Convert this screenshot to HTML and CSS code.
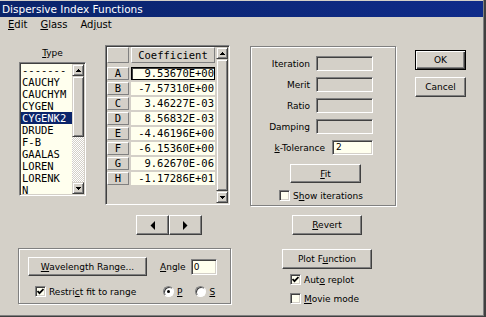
FILE: index.html
```html
<!DOCTYPE html>
<html lang="en">
<head>
    <meta charset="UTF-8">
    <title>Dispersive Index Functions</title>
    <link rel="stylesheet" href="styles.css">
</head>
<body>
<div class="window">
    <div class="titlebar">Dispersive Index Functions</div>
    <div class="menubar">
        <span><u>E</u>dit</span>
        <span><u>G</u>lass</span>
        <span>Ad<u>j</u>ust</span>
    </div>

    <div class="dialog">
        <!-- left side: type list, coefficient grid, wavelength group -->
        <div class="col-left">
            <div class="top-row">
                <div class="type-col">
                    <div class="type-label"><u>T</u>ype</div>
                    <div class="listbox sunken">
                        <div class="list-items">
                            <div class="item">-------</div>
                            <div class="item">CAUCHY</div>
                            <div class="item">CAUCHYM</div>
                            <div class="item">CYGEN</div>
                            <div class="item selected">CYGENK2</div>
                            <div class="item">DRUDE</div>
                            <div class="item">F-B</div>
                            <div class="item">GAALAS</div>
                            <div class="item">LOREN</div>
                            <div class="item">LORENK</div>
                            <div class="item">N</div>
                        </div>
                        <div class="vscroll">
                            <div class="sb-btn"><svg width="5" height="3" shape-rendering="crispEdges"><path d="M2 0h1v1h1v1h1v1H0V2h1V1h1z"/></svg></div>
                            <div class="sb-thumb list-thumb"></div>
                            <div class="sb-track"></div>
                            <div class="sb-btn"><svg width="5" height="3" shape-rendering="crispEdges"><path d="M0 0h5v1H4v1H3v1H2V2H1V1H0z"/></svg></div>
                        </div>
                    </div>
                </div>

                <div class="grid sunken">
                    <div class="grid-cells">
                        <div class="grid-head">
                            <div class="hcell corner"></div>
                            <div class="hcell coef">Coefficient</div>
                        </div>
                        <div class="grid-rows">
                            <div class="rcell">A</div><div class="vcell current">9.53670E+00</div>
                            <div class="rcell">B</div><div class="vcell">-7.57310E+00</div>
                            <div class="rcell">C</div><div class="vcell">3.46227E-03</div>
                            <div class="rcell">D</div><div class="vcell">8.56832E-03</div>
                            <div class="rcell">E</div><div class="vcell">-4.46196E+00</div>
                            <div class="rcell">F</div><div class="vcell">-6.15360E+00</div>
                            <div class="rcell">G</div><div class="vcell">9.62670E-06</div>
                            <div class="rcell">H</div><div class="vcell">-1.17286E+01</div>
                        </div>
                    </div>
                    <div class="vscroll">
                        <div class="sb-btn"><svg width="5" height="3" shape-rendering="crispEdges"><path d="M2 0h1v1h1v1h1v1H0V2h1V1h1z"/></svg></div>
                        <div class="sb-thumb grid-thumb"></div>
                        <div class="sb-btn"><svg width="5" height="3" shape-rendering="crispEdges"><path d="M0 0h5v1H4v1H3v1H2V2H1V1H0z"/></svg></div>
                    </div>
                </div>
            </div>

            <div class="nav-buttons">
                <button class="btn nav"><svg width="5" height="9"><path d="M5 0v9L0.5 4.5z"/></svg></button>
                <button class="btn nav"><svg width="5" height="9"><path d="M0 0v9l4.5-4.5z"/></svg></button>
            </div>

            <div class="groupbox range-group">
                <button class="btn range-btn"><span><u>W</u>avelength Range...</span></button>
                <div class="angle">
                    <span><u>A</u>ngle</span>
                    <div class="textbox edit angle-box">0</div>
                </div>
                <div class="check-row restrict">
                    <div class="check"><svg width="7" height="7"><path d="M0.5 3l2 2.2L6.5 1" fill="none" stroke="#000" stroke-width="1.8"/></svg></div>
                    <span>Restri<u>c</u>t fit to range</span>
                </div>
                <div class="radios">
                    <div class="radio"><span class="dot"></span></div>
                    <span class="radio-text"><u>P</u></span>
                    <div class="radio s-radio"></div>
                    <span class="radio-text"><u>S</u></span>
                </div>
            </div>
        </div>

        <!-- middle: fit settings -->
        <div class="col-mid">
            <div class="groupbox fit-group">
                <div class="field-row"><span>Iteration</span><div class="textbox wide"></div></div>
                <div class="field-row"><span>Merit</span><div class="textbox wide"></div></div>
                <div class="field-row"><span>Ratio</span><div class="textbox wide"></div></div>
                <div class="field-row"><span>Damping</span><div class="textbox wide"></div></div>
                <div class="field-row tol"><span><u>k</u>-Tolerance</span><div class="textbox edit narrow">2</div></div>
                <button class="btn fit-btn"><span><u>F</u>it</span></button>
                <div class="check-row show-iter">
                    <div class="check"></div>
                    <span>S<u>h</u>ow iterations</span>
                </div>
            </div>
            <button class="btn revert-btn"><span><u>R</u>evert</span></button>
            <button class="btn plot-btn"><span>Plot F<u>u</u>nction</span></button>
            <div class="check-row auto-replot">
                <div class="check"><svg width="7" height="7"><path d="M0.5 3l2 2.2L6.5 1" fill="none" stroke="#000" stroke-width="1.8"/></svg></div>
                <span>Aut<u>o</u> replot</span>
            </div>
            <div class="check-row movie">
                <div class="check"></div>
                <span><u>M</u>ovie mode</span>
            </div>
        </div>

        <!-- right: dialog buttons -->
        <div class="col-right">
            <button class="btn default ok-btn">OK</button>
            <button class="btn cancel-btn">Cancel</button>
        </div>
    </div>
</div>
</body>
</html>
```

FILE: styles.css
```css
* {
    box-sizing: border-box;
}
body {
    margin: 0;
    font-family: "DejaVu Sans", sans-serif;
    font-size: 9px;
    color: #000;
}
.window {
    width: 486px;
    height: 317px;
    background: #d4d0c8;
    border-right: 2px solid #404040;
    border-bottom: 1px solid #404040;
    box-shadow: inset -1px -1px #808080;
    padding-top: 1px;
    overflow: hidden;
}
.titlebar {
    height: 16px;
    margin-right: 1px;
    padding-left: 2px;
    background: linear-gradient(90deg, #0a246a, #0f2b8a);
    color: #fff;
    font-size: 10.5px;
    line-height: 16px;
    white-space: nowrap;
}
.menubar {
    display: flex;
    gap: 13px;
    height: 16px;
    padding-left: 8px;
    font-size: 10px;
    line-height: 16px;
}
.dialog {
    display: flex;
    padding-left: 18px;
}

/* shared 3d pieces */
.sunken {
    border: 1px solid;
    border-color: #808080 #fff #fff #808080;
    padding: 1px;
    box-shadow: inset 1px 1px #404040, inset -1px -1px #d4d0c8;
}
.btn {
    display: flex;
    align-items: center;
    justify-content: center;
    padding: 0;
    font: inherit;
    color: #000;
    background: #d4d0c8;
    border: 1px solid;
    border-color: #fff #404040 #404040 #fff;
    box-shadow: inset -1px -1px #808080;
}
.btn.default {
    border-color: #000;
    box-shadow: inset 1px 1px #fff, inset -1px -1px #404040, inset -2px -2px #808080;
}
.groupbox {
    border: 1px solid #808080;
    box-shadow: inset 1px 1px #fff, 1px 1px #fff;
}
.textbox {
    height: 15px;
    padding-left: 3px;
    line-height: 13px;
    background: #d4d0c8;
    border: 1px solid;
    border-color: #808080 #fff #fff #808080;
    box-shadow: inset 1px 1px #404040, inset -1px -1px #d4d0c8;
}
.textbox.edit {
    background: #ffffee;
}
.check-row {
    display: flex;
    align-items: center;
    height: 11px;
}
.check {
    display: flex;
    align-items: center;
    justify-content: center;
    width: 11px;
    height: 11px;
    margin-right: 3px;
    background: #fffff0;
    border: 1px solid;
    border-color: #808080 #fff #fff #808080;
    box-shadow: inset 1px 1px #404040, inset -1px -1px #d4d0c8;
}
.radio {
    display: flex;
    align-items: center;
    justify-content: center;
    width: 11px;
    height: 11px;
    border-radius: 50%;
    background: #fff;
    border: 1px solid;
    border-color: #808080 #fff #fff #808080;
    box-shadow: inset 1px 1px #404040;
}
.dot {
    width: 3px;
    height: 3px;
    border-radius: 50%;
    background: #000;
}

/* scrollbars */
.vscroll {
    display: flex;
    flex-direction: column;
    width: 12px;
}
.sb-btn, .sb-thumb {
    background: #d4d0c8;
    border: 1px solid;
    border-color: #d4d0c8 #404040 #404040 #d4d0c8;
    box-shadow: inset 1px 1px #fff, inset -1px -1px #808080;
}
.sb-btn {
    display: flex;
    align-items: center;
    justify-content: center;
    height: 12px;
}
.list-thumb {
    height: 61px;
}
.grid-thumb {
    flex: 1;
}
.sb-track {
    flex: 1;
    background: repeating-conic-gradient(#fff 0 25%, #d4d0c8 0 50%) 0 0 / 2px 2px;
}

/* left column */
.col-left {
    width: 213px;
}
.top-row {
    display: flex;
    margin-top: 12px;
}
.type-col {
    width: 67px;
    margin-left: 1px;
    padding-top: 2px;
}
.type-label {
    text-align: center;
    line-height: 13px;
    margin-bottom: 2px;
}
.listbox {
    display: flex;
    height: 134px;
    background: #ffffee;
}
.list-items {
    flex: 1;
    overflow: hidden;
    font-family: "DejaVu Sans Mono", monospace;
    font-size: 10.5px;
}
.item {
    height: 12px;
    line-height: 12px;
    padding-left: 1px;
    white-space: nowrap;
}
.item.selected {
    background: #0a246a;
    color: #fff;
}
.grid {
    display: flex;
    width: 125px;
    height: 160px;
    margin-left: 19px;
    background: #d4d0c8;
}
.grid-cells {
    flex: 1;
    font-family: "DejaVu Sans Mono", monospace;
    font-size: 10.5px;
}
.grid-head {
    display: flex;
    gap: 2px;
    height: 16px;
}
.hcell {
    border: 1px solid;
    border-color: #fff #808080 #808080 #fff;
    line-height: 14px;
    text-align: center;
}
.hcell.corner {
    width: 22px;
}
.hcell.coef {
    width: 84px;
}
.grid-rows {
    display: grid;
    grid-template-columns: 22px 84px;
    grid-auto-rows: 13px;
    column-gap: 2px;
    row-gap: 2px;
    margin-top: 4px;
}
.rcell {
    border: 1px solid;
    border-color: #fff #808080 #808080 #fff;
    text-align: center;
    line-height: 11px;
}
.vcell {
    background: #ffffee;
    text-align: right;
    padding-right: 1px;
    line-height: 13px;
}
.vcell.current {
    box-shadow: inset 0 0 0 1px #000, inset 1px 1px 0 1px #404040;
}
.nav-buttons {
    display: flex;
    margin: 10px 0 0 118px;
}
.btn.nav {
    width: 33px;
    height: 20px;
}
.range-group {
    display: grid;
    grid-template-columns: 132px auto;
    row-gap: 10px;
    align-items: center;
    height: 56px;
    margin-top: 13px;
    padding: 8px 0 0 9px;
    align-content: start;
}
.range-btn {
    width: 119px;
    height: 19px;
}
.angle {
    display: flex;
    align-items: center;
    gap: 5px;
}
.angle-box {
    width: 26px;
    height: 16px;
    line-height: 14px;
    padding-left: 2px;
}
.restrict {
    padding-left: 7px;
}
.radios {
    display: flex;
    align-items: center;
    height: 11px;
    padding-left: 3px;
}
.radio-text {
    margin-left: 3px;
}
.s-radio {
    margin-left: 13px;
}

/* middle column */
.col-mid {
    width: 146px;
    margin-left: 19px;
}
.fit-group {
    display: flex;
    flex-direction: column;
    height: 160px;
    margin-top: 13px;
    padding: 9px 22px 0 0;
}
.field-row {
    display: flex;
    justify-content: flex-end;
    align-items: center;
    gap: 6px;
    height: 15px;
}
.field-row + .field-row {
    margin-top: 6px;
}
.field-row.tol {
    gap: 7px;
}
.textbox.wide {
    width: 57px;
}
.textbox.narrow {
    width: 41px;
}
.fit-btn {
    width: 71px;
    height: 19px;
    margin: 9px 0 0 39px;
}
.show-iter {
    margin: 7px 0 0 28px;
}
.revert-btn {
    width: 70px;
    height: 20px;
    margin: 9px 0 0 42px;
}
.plot-btn {
    width: 90px;
    height: 20px;
    margin: 14px 0 0 32px;
}
.auto-replot {
    margin: 5px 0 0 40px;
}
.movie {
    margin: 8px 0 0 40px;
}

/* right column */
.col-right {
    width: 51px;
    margin-left: 19px;
}
.ok-btn {
    width: 51px;
    height: 20px;
    margin-top: 17px;
}
.cancel-btn {
    width: 51px;
    height: 20px;
    margin-top: 7px;
}
```
